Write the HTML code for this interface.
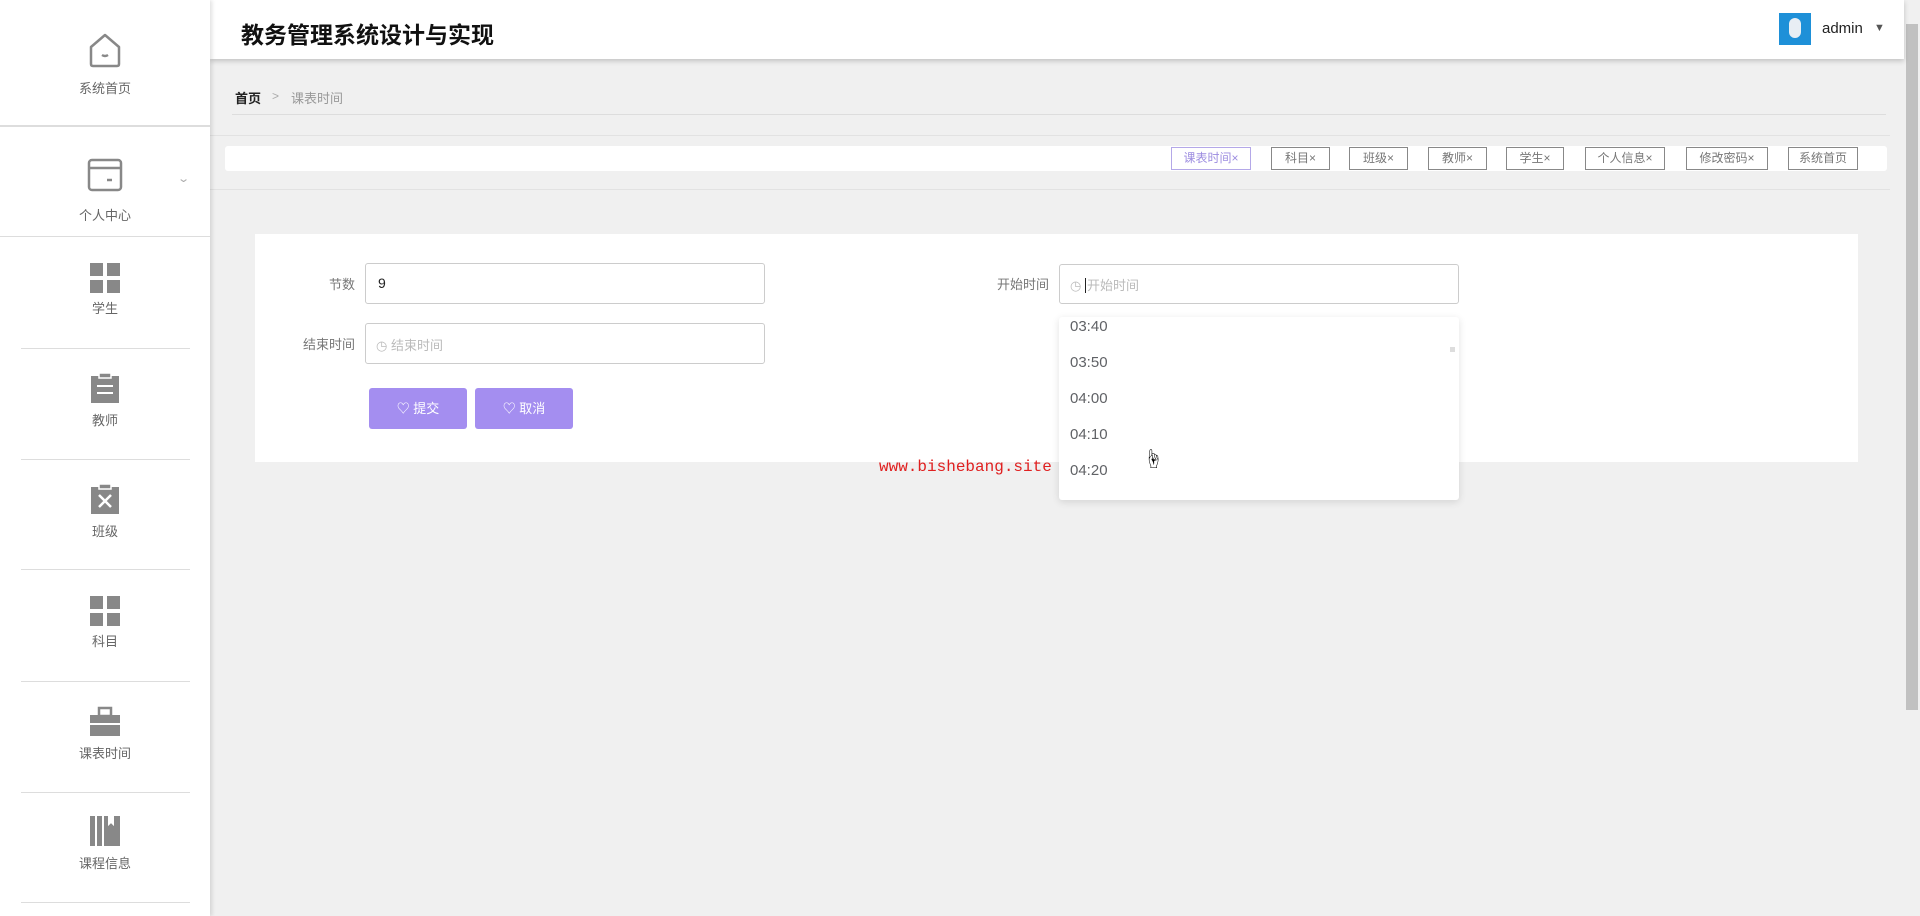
<!DOCTYPE html>
<html><head><meta charset="utf-8"><style>
*{margin:0;padding:0;box-sizing:border-box}
body{width:1920px;height:916px;overflow:hidden;background:#f0f0f0;font-family:"Liberation Sans","Noto Sans CJK SC",sans-serif;position:relative}
.a{position:absolute}
.side{left:0;top:0;width:210px;height:916px;background:#fff;box-shadow:2px 0 4px rgba(0,0,0,.12);z-index:3}
.st{position:absolute;left:0;width:210px;text-align:center;font-size:13px;color:#666}
.ic{position:absolute;left:90px;width:30px;height:30px}
.dv{position:absolute;left:21px;width:169px;height:1px;background:#ddd}
.hdr{left:210px;top:0;width:1694px;height:59px;background:#fff;box-shadow:0 2px 5px rgba(0,0,0,.2);z-index:2}
.tag{position:absolute;top:147px;height:23px;border:1px solid #888;background:#fff;font-size:12px;color:#777;text-align:center;line-height:21px}
.lbl{position:absolute;font-size:13px;color:#777;text-align:right;width:90px}
.inp{position:absolute;border:1px solid #ccc;border-radius:3px;background:#fff;font-size:13px}
.btn{position:absolute;top:388px;width:98px;height:41px;background:#a48ef0;border-radius:3px;color:#fff;font-size:13px;text-align:center;line-height:41px}
.ti{position:absolute;left:1070px;font-size:15px;color:#606266}
</style></head><body>
<div class="a side">
 <svg class="ic" style="top:30px;left:85px;width:40px;height:40px" viewBox="0 0 40 40"><path d="M6 17 L20 5 L34 17 V34 Q34 36 32 36 H8 Q6 36 6 34 Z" fill="none" stroke="#888" stroke-width="2.5" stroke-linejoin="round"/><path d="M17 25 Q20 27 23 25" stroke="#888" stroke-width="2.5" fill="none"/></svg>
 <div class="st" style="top:78px">系统首页</div>
 <div class="a" style="left:0;top:125px;width:210px;height:2px;background:#ddd"></div>
 <svg class="ic" style="top:157px;left:87px;width:36px;height:36px" viewBox="0 0 36 36"><rect x="2" y="3" width="32" height="30" rx="3" fill="none" stroke="#888" stroke-width="2.5"/><line x1="2" y1="11" x2="34" y2="11" stroke="#888" stroke-width="2.5"/><line x1="20" y1="23" x2="25" y2="23" stroke="#888" stroke-width="2.5"/></svg>
 <div class="a" style="left:179px;top:172px;font-size:11px;color:#aaa;transform:scaleX(1.4)">⌄</div>
 <div class="st" style="top:205px">个人中心</div>
 <div class="a" style="left:0;top:236px;width:210px;height:1px;background:#ddd"></div>
 <svg class="ic" style="top:263px" viewBox="0 0 30 30"><rect x="0" y="0" width="13" height="13" fill="#888"/><rect x="17" y="0" width="13" height="13" fill="#888"/><rect x="0" y="17" width="13" height="13" fill="#888"/><rect x="17" y="17" width="13" height="13" fill="#888"/></svg>
 <div class="st" style="top:298px">学生</div>
 <div class="dv" style="top:348px"></div>
 <svg class="ic" style="top:373px" viewBox="0 0 30 30"><rect x="1" y="3" width="28" height="27" fill="#888"/><rect x="9" y="0" width="12" height="5" fill="#888" stroke="#fff" stroke-width="1.5"/><rect x="7" y="12" width="16" height="2" fill="#fff"/><rect x="7" y="19" width="16" height="2" fill="#fff"/></svg>
 <div class="st" style="top:410px">教师</div>
 <div class="dv" style="top:459px"></div>
 <svg class="ic" style="top:484px" viewBox="0 0 30 30"><rect x="1" y="3" width="28" height="27" fill="#888"/><rect x="9" y="0" width="12" height="5" fill="#888" stroke="#fff" stroke-width="1.5"/><path d="M9 11 L21 23 M21 11 L9 23" stroke="#fff" stroke-width="2.5"/></svg>
 <div class="st" style="top:521px">班级</div>
 <div class="dv" style="top:569px"></div>
 <svg class="ic" style="top:596px" viewBox="0 0 30 30"><rect x="0" y="0" width="13" height="13" fill="#888"/><rect x="17" y="0" width="13" height="13" fill="#888"/><rect x="0" y="17" width="13" height="13" fill="#888"/><rect x="17" y="17" width="13" height="13" fill="#888"/></svg>
 <div class="st" style="top:631px">科目</div>
 <div class="dv" style="top:681px"></div>
 <svg class="ic" style="top:706px" viewBox="0 0 30 30"><rect x="9" y="2" width="12" height="8" fill="none" stroke="#888" stroke-width="2.5"/><rect x="0" y="9" width="30" height="8" fill="#888"/><rect x="0" y="19" width="30" height="11" fill="#888"/></svg>
 <div class="st" style="top:743px">课表时间</div>
 <div class="dv" style="top:792px"></div>
 <svg class="ic" style="top:816px" viewBox="0 0 30 30"><rect x="0" y="0" width="5" height="30" fill="#888"/><rect x="7" y="0" width="5" height="30" fill="#888"/><path d="M14 0 H30 V30 H14 Z M18 0 V10 L21 7 L24 10 V0" fill="#888"/><path d="M18 0 V10 L21 7 L24 10 V0 Z" fill="#fff"/></svg>
 <div class="st" style="top:853px">课程信息</div>
 <div class="dv" style="top:902px"></div>
</div>
<div class="a hdr">
 <div class="a" style="left:31px;top:16px;font-size:23px;font-weight:bold;color:#111">教务管理系统设计与实现</div>
 <div class="a" style="left:1569px;top:13px;width:32px;height:32px;background:#1e90d8"><div style="margin:5px 0 0 10px;width:12px;height:20px;background:#e8eef4;border-radius:6px"></div></div>
 <div class="a" style="left:1612px;top:20px;font-size:15px;color:#222">admin</div>
 <div class="a" style="left:1664px;top:22px;font-size:11px;color:#555">▼</div>
</div>
<div class="a" style="left:1904px;top:0;width:16px;height:916px;background:#f0f0f0"></div>
<div class="a" style="left:1906px;top:24px;width:12px;height:686px;background:#c1c1c1"></div>
<div class="a" style="left:235px;top:88px;font-size:13px;font-weight:bold;color:#222">首页</div>
<div class="a" style="left:272px;top:89px;font-size:12px;color:#aaa">&gt;</div>
<div class="a" style="left:291px;top:88px;font-size:13px;color:#999">课表时间</div>
<div class="a" style="left:232px;top:114px;width:1654px;height:1px;background:#ddd"></div>
<div class="a" style="left:210px;top:135px;width:1680px;height:1px;background:#e2e2e2"></div>
<div class="a" style="left:225px;top:146px;width:1662px;height:25px;background:#fff;border-radius:3px"></div>
<div class="a" style="left:210px;top:189px;width:1680px;height:1px;background:#e2e2e2"></div>
<div class="tag" style="left:1171px;width:80px;color:#9c8ce0;border-color:#b4a8e8">课表时间×</div>
<div class="tag" style="left:1271px;width:59px">科目×</div>
<div class="tag" style="left:1349px;width:59px">班级×</div>
<div class="tag" style="left:1428px;width:59px">教师×</div>
<div class="tag" style="left:1506px;width:58px">学生×</div>
<div class="tag" style="left:1585px;width:80px">个人信息×</div>
<div class="tag" style="left:1686px;width:82px">修改密码×</div>
<div class="tag" style="left:1788px;width:70px">系统首页</div>
<div class="a" style="left:255px;top:234px;width:1603px;height:228px;background:#fff"></div>
<div class="lbl" style="left:265px;top:274px">节数</div>
<div class="inp" style="left:365px;top:263px;width:400px;height:41px;padding:11px 12px;font-size:14px;color:#222">9</div>
<div class="lbl" style="left:265px;top:334px">结束时间</div>
<div class="inp" style="left:365px;top:323px;width:400px;height:41px;padding:11px 10px;color:#bbb">◷ 结束时间</div>
<div class="btn" style="left:369px">♡ 提交</div>
<div class="btn" style="left:475px">♡ 取消</div>
<div class="lbl" style="left:959px;top:274px">开始时间</div>
<div class="inp" style="left:1059px;top:264px;width:400px;height:40px;padding:10px 10px;color:#bbb">◷ <span style="border-left:1px solid #222;padding-left:1px">开始时间</span></div>
<div class="a" style="left:1059px;top:317px;width:400px;height:183px;background:#fff;box-shadow:0 2px 8px rgba(0,0,0,.12);border-radius:3px"></div>
<div class="a" style="left:1450px;top:347px;width:5px;height:5px;background:#ddd"></div>
<div class="ti" style="top:318px">03:40</div>
<div class="ti" style="top:354px">03:50</div>
<div class="ti" style="top:390px">04:00</div>
<div class="ti" style="top:426px">04:10</div>
<div class="ti" style="top:462px">04:20</div>
<div class="a" style="left:1143px;top:443px;font-size:20px;color:#000">☝</div>
<div class="a" style="left:879px;top:458px;font-family:'Liberation Mono',monospace;font-size:16px;color:#e02020">www.bishebang.site</div>
</body></html>
